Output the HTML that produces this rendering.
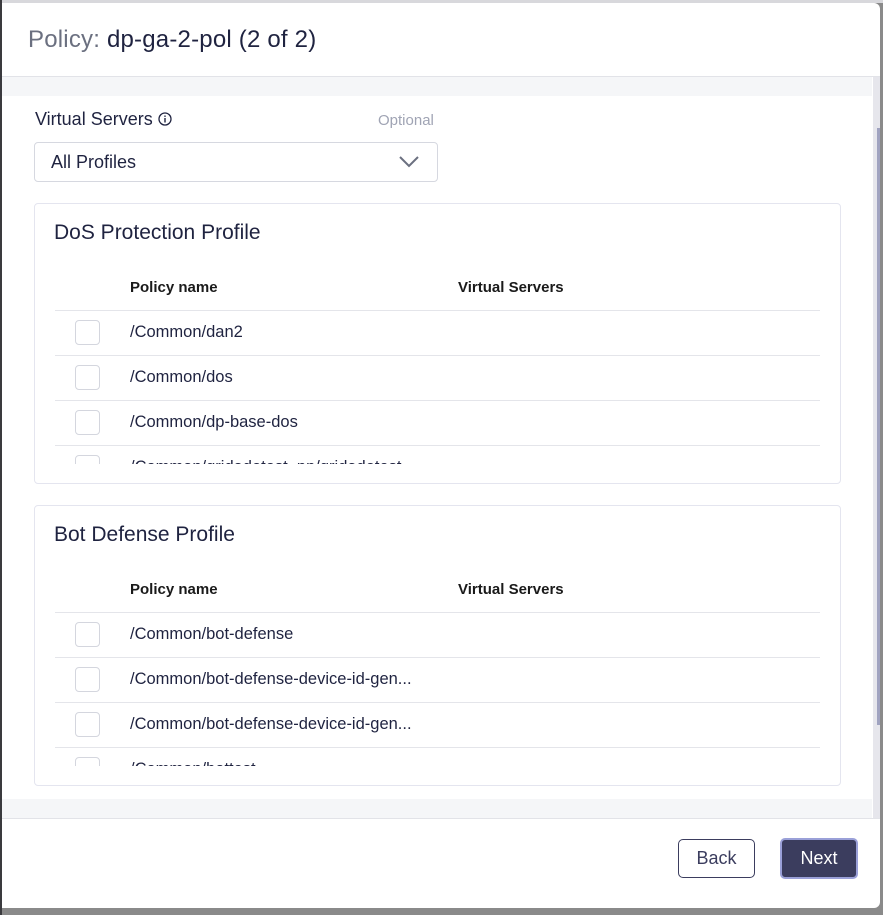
<!DOCTYPE html>
<html><head><style>
*{box-sizing:border-box;margin:0;padding:0}
body{width:883px;height:915px;background:#8a8a8a;font-family:"Liberation Sans",sans-serif;position:relative;overflow:hidden;color:#1f2340}
.modal{position:absolute;left:2px;top:3px;width:878px;height:905px;background:#fff;border-radius:0 6px 6px 0;overflow:hidden}
.top{position:absolute;left:0;top:0;width:883px;height:3px;background:#d8d8dc}
.leftbar{position:absolute;left:0;top:0;width:2px;height:915px;background:#3a3a3e}
.hdr{position:absolute;left:0;top:0;width:878px;height:74px;border-bottom:1px solid #e2e3e8}
.hdr h1{position:absolute;left:26px;top:23px;font-size:24px;font-weight:normal;color:#1f2340;letter-spacing:0.2px}
.hdr h1 span{color:#6b7080}
.band{position:absolute;left:0;width:870px;height:19px;background:#f5f6f8}
.scroll{position:absolute;left:871px;top:74px;width:7px;height:742px;background:#e6e6ec}
.thumb{position:absolute;left:875px;top:125px;width:4px;height:597px;background:#a0a3c0}
.lbl{position:absolute;left:33px;top:106px;font-size:18px;color:#1f2340}
.opt{position:absolute;left:376px;top:109px;font-size:15px;color:#a0a4b4}
.sel{position:absolute;left:32px;top:139px;width:404px;height:40px;border:1px solid #d6d8e0;border-radius:4px}
.sel span{position:absolute;left:16px;top:9px;font-size:18px}
.card{position:absolute;left:32px;width:807px;height:281px;border:1px solid #e4e5ef;border-radius:4px;overflow:hidden}
.card h2{position:absolute;left:19px;top:17px;font-size:21px;font-weight:normal;color:#1f2340}
.th{position:absolute;top:75px;font-size:15px;font-weight:bold;color:#1a1a1a}
.row{position:absolute;left:20px;width:765px;height:45px;border-top:1px solid #e4e5ea}
.cb{position:absolute;left:20px;top:9px;width:25px;height:25px;border:1px solid #d4d6de;border-radius:4px;background:#fff}
.row span{position:absolute;left:75px;top:12px;font-size:16.5px;color:#1f2340;white-space:nowrap}
.clip{position:absolute;left:20px;width:765px;height:30px;background:#fff}
.foot{position:absolute;left:0;top:815px;width:878px;height:1px;background:#e2e3e8}
.btn{position:absolute;font-size:18px;border-radius:5px;text-align:center}
</style></head><body>
<div class="top"></div><div class="leftbar"></div>
<div class="modal">
<div class="hdr"><h1><span>Policy:</span> dp-ga-2-pol (2 of 2)</h1></div>
<div class="band" style="top:74px"></div>
<div class="lbl">Virtual Servers <svg width="14" height="14" viewBox="0 0 14 14" style="vertical-align:-1px"><circle cx="7" cy="7" r="6" fill="none" stroke="#1f2340" stroke-width="1.3"/><rect x="6.3" y="6" width="1.4" height="4.5" fill="#1f2340"/><rect x="6.3" y="3.5" width="1.4" height="1.4" fill="#1f2340"/></svg></div>
<div class="opt">Optional</div>
<div class="sel"><span>All Profiles</span><svg style="position:absolute;left:364px;top:13px" width="20" height="12" viewBox="0 0 20 12"><path d="M1 1 L10 10 L19 1" fill="none" stroke="#6b7080" stroke-width="2"/></svg></div>

<div class="card" style="top:200px"><h2>DoS Protection Profile</h2>
<div class="th" style="left:95px">Policy name</div><div class="th" style="left:423px">Virtual Servers</div>
<div class="row" style="top:106px"><div class="cb"></div><span>/Common/dan2</span></div>
<div class="row" style="top:151px"><div class="cb"></div><span>/Common/dos</span></div>
<div class="row" style="top:196px"><div class="cb"></div><span>/Common/dp-base-dos</span></div>
<div class="row" style="top:241px"><div class="cb"></div><span>/Common/gridadetest_pp/gridadetest</span></div>
<div class="clip" style="top:260px"></div>
</div>

<div class="card" style="top:502px"><h2>Bot Defense Profile</h2>
<div class="th" style="left:95px">Policy name</div><div class="th" style="left:423px">Virtual Servers</div>
<div class="row" style="top:106px"><div class="cb"></div><span>/Common/bot-defense</span></div>
<div class="row" style="top:151px"><div class="cb"></div><span>/Common/bot-defense-device-id-gen...</span></div>
<div class="row" style="top:196px"><div class="cb"></div><span>/Common/bot-defense-device-id-gen...</span></div>
<div class="row" style="top:241px"><div class="cb"></div><span>/Common/bottest</span></div>
<div class="clip" style="top:260px"></div>
</div>

<div class="band" style="top:796px"></div>
<div class="scroll"></div><div class="thumb"></div>
<div class="foot"></div>
<div class="btn" style="left:676px;top:836px;width:77px;height:39px;border:1px solid #3b3d5e;line-height:37px;color:#3b3d5e">Back</div>
<div class="btn" style="left:778px;top:835px;width:78px;height:41px;border:2px solid #9aa0d8;background:#3b3d5e;color:#fff;line-height:37px">Next</div>
</div>
</body></html>
